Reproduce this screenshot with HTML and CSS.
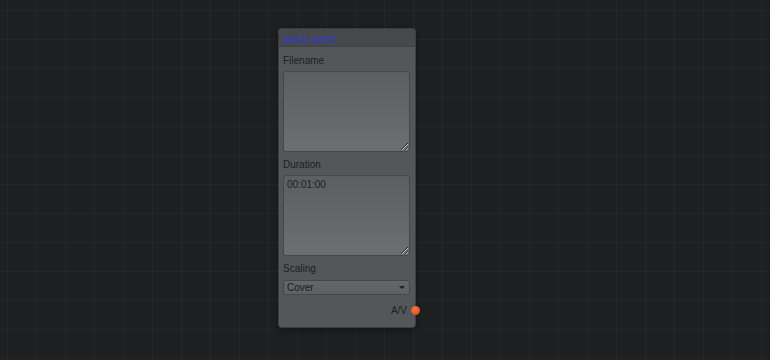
FILE: index.html
```html
<!DOCTYPE html>
<html lang="en">
<head>
  <meta charset="UTF-8">
  <title>Graph Editor</title>
  <link rel="stylesheet" href="styles.css">
</head>
<body>
  <div class="canvas">
    <div class="node">
      <div class="node-title"><span class="title-text">IMAGE ASSET</span></div>
      <div class="node-body">
        <div class="field">
          <label class="field-label">Filename</label>
          <textarea class="field-text"></textarea>
        </div>
        <div class="field">
          <label class="field-label">Duration</label>
          <textarea class="field-text">00:01:00</textarea>
        </div>
        <div class="field">
          <label class="field-label">Scaling</label>
          <div class="select-wrap">
            <select class="field-select">
              <option>Cover</option>
              <option>Contain</option>
              <option>Stretch</option>
            </select>
          </div>
        </div>
        <div class="node-out">
          <span class="out-label">A/V</span>
          <span class="out-port"></span>
        </div>
      </div>
    </div>
  </div>
</body>
</html>
```

FILE: styles.css
```css
body {
  margin: 0;
  font-family: "Liberation Sans", Arial, sans-serif;
  background-color: #1e1f21;
}
.canvas {
  position: relative;
  width: 770px;
  height: 360px;
  overflow: hidden;
  background-color: #1e1f21;
  background-image:
    linear-gradient(to right, rgba(255,255,255,0.03) 1px, transparent 1px),
    linear-gradient(to bottom, rgba(255,255,255,0.03) 1px, transparent 1px);
  background-size: 29px 29px;
  background-position: 7px 10px;
}
.node {
  position: absolute;
  left: 279px;
  top: 29px;
  width: 136px;
  background: #53575a;
  border-radius: 3px;
  box-shadow: 0 0 0 1px #3c3f41, 0 2px 6px rgba(0,0,0,0.5);
}
.node-title {
  height: 17px;
  line-height: 18px;
  padding-left: 4px;
  background: #46494b;
  border-bottom: 1px solid #404345;
  border-radius: 3px 3px 0 0;
}
.title-text {
  display: inline-block;
  font-family: "DejaVu Sans", sans-serif;
  font-size: 9px;
  font-weight: bold;
  color: #363cab;
  transform: scaleX(0.8);
  transform-origin: left center;
}
.node-body {
  padding: 7px 5px 10px 4px;
  display: flex;
  flex-direction: column;
  gap: 6px;
}
.field {
  display: flex;
  flex-direction: column;
  gap: 4px;
}
.field-label {
  font-size: 10px;
  line-height: 13px;
  color: #1e2022;
}
.field-text {
  display: block;
  box-sizing: border-box;
  width: 127px;
  height: 81px;
  margin: 0;
  padding: 3px 3px;
  border: 1px solid #45484a;
  border-radius: 3px;
  background: linear-gradient(to bottom, #5b5f62, #6b6f71);
  font-family: "Liberation Sans", Arial, sans-serif;
  font-size: 10px;
  color: #1e2022;
  resize: both;
  outline: none;
}
.select-wrap {
  position: relative;
  width: 127px;
  height: 15px;
  margin-top: 1px;
}
.select-wrap::after {
  content: "";
  position: absolute;
  right: 5px;
  top: 6px;
  border-left: 3px solid transparent;
  border-right: 3px solid transparent;
  border-top: 3px solid #1e2022;
  pointer-events: none;
}
.field-select {
  display: block;
  -webkit-appearance: none;
  appearance: none;
  box-sizing: border-box;
  width: 127px;
  height: 15px;
  margin: 0;
  padding: 0 0 0 3px;
  border: 1px solid #45484a;
  border-radius: 3px;
  background: linear-gradient(to bottom, #63676a, #5d6164);
  font-family: "Liberation Sans", Arial, sans-serif;
  font-size: 10px;
  line-height: 13px;
  color: #1a1c1e;
  outline: none;
}
.node-out {
  position: relative;
  display: flex;
  justify-content: flex-end;
  margin-top: 4px;
  padding-right: 3px;
}
.out-label {
  font-size: 10px;
  line-height: 12px;
  color: #1e2022;
}
.out-port {
  position: absolute;
  right: -10px;
  top: 1px;
  width: 9px;
  height: 9px;
  border-radius: 50%;
  background: radial-gradient(circle at 40% 35%, #f2794a, #e2521f 70%);
  box-shadow: 0 0 1px rgba(0,0,0,0.4);
}
```
